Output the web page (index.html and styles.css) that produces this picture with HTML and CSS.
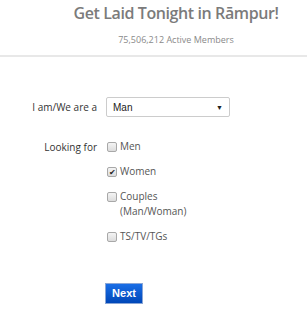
FILE: index.html
```html
<!DOCTYPE html>
<html lang="en">
<head>
  <meta charset="UTF-8">
  <title>Get Laid Tonight</title>
  <link rel="stylesheet" href="styles.css">
</head>
<body>

  <div class="header">
    <h1>Get Laid Tonight in Rāmpur!</h1>
    <p class="members">75,506,212 Active Members</p>
  </div>

  <form class="signup">
    <div class="row row-select">
      <label class="label" for="gender">I am/We are a</label>
      <div class="field">
        <div class="select">
          <span>Man</span>
          <span class="arrow">▼</span>
        </div>
      </div>
    </div>

    <div class="row row-looking">
      <span class="label">Looking for</span>
      <div class="field options">
        <label class="option"><span class="box"></span><span>Men</span></label>
        <label class="option"><span class="box checked">✔</span><span>Women</span></label>
        <label class="option"><span class="box"></span><span>Couples<br>(Man/Woman)</span></label>
        <label class="option"><span class="box"></span><span>TS/TV/TGs</span></label>
      </div>
    </div>

    <div class="row row-submit">
      <span class="label"></span>
      <div class="field">
        <button type="button" class="next">Next</button>
      </div>
    </div>
  </form>

</body>
</html>
```

FILE: styles.css
```css
* { box-sizing: border-box; }
body {
  margin: 0;
  font-family: 'Open Sans', sans-serif;
  background: #ffffff;
  color: #333333;
}

.header {
  text-align: center;
  padding-left: 45px;
  border-bottom: 2px solid #e8e8e8;
  height: 57px;
}
.header h1 {
  margin: 0;
  font-size: 16px;
  line-height: 26px;
  font-weight: 600;
  letter-spacing: -0.4px;
  color: #7b7b7b;
}
.members {
  margin: 8px 0 0;
  font-size: 9px;
  line-height: 12px;
  color: #8a8a8a;
}

.signup { padding-top: 40px; }

.row {
  display: flex;
  align-items: flex-start;
}
.label {
  width: 97px;
  text-align: right;
  font-size: 10px;
  color: #333;
  flex-shrink: 0;
}
.field { margin-left: 9px; }

.row-select .label { line-height: 20px; }
.select {
  width: 124px;
  height: 20px;
  border: 1px solid #cccccc;
  border-radius: 2px;
  display: flex;
  align-items: center;
  justify-content: space-between;
  padding: 0 6px;
  font-family: 'Liberation Sans', Arial, sans-serif;
  font-size: 10px;
  color: #222;
}
.arrow { font-size: 7px; color: #222; }

.row-looking { margin-top: 22px; }
.row-looking .label { line-height: 16px; }
.options {
  display: flex;
  flex-direction: column;
  gap: 10px;
}
.option {
  display: flex;
  align-items: flex-start;
  font-size: 10px;
  line-height: 15px;
  color: #555;
}
.box {
  width: 10px;
  height: 10px;
  margin: 3px 3px 0 1px;
  border: 1px solid #a8a8a8;
  border-radius: 2px;
  background: linear-gradient(#f4f4f4, #dcdcdc);
  flex-shrink: 0;
  font-size: 8px;
  line-height: 8px;
  text-align: center;
  color: #222;
}

.row-submit { margin-top: 36px; }
.next {
  width: 38px;
  height: 21px;
  margin-left: -1px;
  padding: 0;
  border: 1px solid #8aa6d6;
  background: linear-gradient(#1a6ee6, #0047b8);
  color: #ffffff;
  font-family: 'Liberation Sans', Arial, sans-serif;
  font-weight: bold;
  font-size: 11px;
  cursor: pointer;
}
```
